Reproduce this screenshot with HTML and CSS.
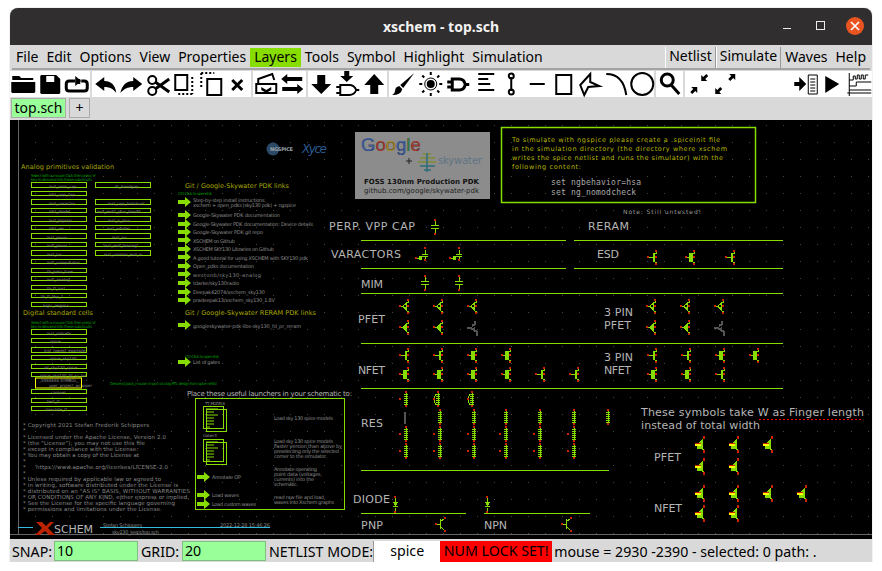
FILE: index.html
```html
<!DOCTYPE html>
<html lang="en">
<head>
  <meta charset="UTF-8" />
  <title>xschem - top.sch</title>
  <link rel="stylesheet" href="styles.css">
</head>
<body>
<div class="window">
  <header class="titlebar">
    <span class="title">xschem - top.sch</span>
    <div class="winbtns">
      <span class="win-min"></span>
      <span class="win-max"></span>
      <span class="win-close">
        <svg width="12" height="12" viewBox="0 0 12 12"><path d="M2 2l8 8M10 2l-8 8" stroke="#fff" stroke-width="1.6"/></svg>
      </span>
    </div>
  </header>

  <nav class="menubar">
    <span class="menu">File</span>
    <span class="menu">Edit</span>
    <span class="menu">Options</span>
    <span class="menu">View</span>
    <span class="menu">Properties</span>
    <span class="menu layers">Layers</span>
    <span class="menu">Tools</span>
    <span class="menu">Symbol</span>
    <span class="menu">Highlight</span>
    <span class="menu">Simulation</span>
    <span class="menu raised push">Netlist</span>
    <span class="menu raised">Simulate</span>
    <span class="menu">Waves</span>
    <span class="menu">Help</span>
  </nav>

  <div class="toolbar">
    <div class="tgroup">
      <svg class="tool" viewBox="0 0 26 26"><path d="M2 5h7l2 2h12v2H2zM1 11h24v10l-1 1H2l-1-1z"/></svg>
      <svg class="tool" viewBox="0 0 26 26"><path fill-rule="evenodd" d="M4 4h15l4 4v14l-1 1H4l-1-1V5zM9 5v6h8V5z"/></svg>
      <svg class="tool" viewBox="0 0 26 26"><path class="line3" d="M12 10H6q-3 0-3 3v4q0 3 3 3h15q3 0 3-3v-4q0-3-3-3h-3"/><path d="M12 5l6 5-6 5zM15 8h2v5h-2z"/></svg>
    </div>
    <div class="tgroup">
      <svg class="tool" viewBox="0 0 26 26"><path d="M3 13l9-7v4c7 0 11 4 12 12-3-4-6-6-12-6v4z"/></svg>
      <svg class="tool" viewBox="0 0 26 26"><path d="M24 13l-9-7v4C8 10 4 14 2 22c4-4 7-6 13-6v4z"/></svg>
      <svg class="tool" viewBox="0 0 26 26"><circle class="line2" cx="7" cy="9" r="4"/><circle class="line2" cx="7" cy="20" r="4"/><path class="line3" d="M10 11l14 10M10 18L24 8"/></svg>
      <svg class="tool" viewBox="0 0 26 26"><rect class="line2" x="4" y="4" width="12" height="15"/><path class="dots" d="M21 6v17M7 23h14"/></svg>
      <svg class="tool" viewBox="0 0 26 26"><rect class="line2" x="9" y="8" width="14" height="16"/><path class="dots" d="M3 2h13M3 2v15"/></svg>
      <svg class="tool" viewBox="0 0 26 26"><path class="line3" d="M8 9l10 10M18 9L8 19"/></svg>
    </div>
    <div class="tgroup">
      <svg class="tool" viewBox="0 0 26 26"><path class="line2" d="M5 13V8l14-5 2 6"/><path class="line2" d="M3 13h20v9H3z"/><path d="M8 16l5 3 5-3v3l-5 3-5-3z"/></svg>
      <svg class="tool" viewBox="0 0 26 26"><path d="M2 8l6-5v3h15v4H8v3zM24 18l-6-5v3H3v4h15v3z"/></svg>
    </div>
    <div class="tgroup">
      <svg class="tool" viewBox="0 0 26 26"><path d="M9 4h8v9h6L13 23 3 13h6z"/></svg>
      <svg class="tool" viewBox="0 0 26 26"><path d="M10 0h5v5h4l-6.500 6L6 5h4z"/><path class="line2" d="M6 14h9q5 0 7 5-2 5-7 5H6zM2 16h4M2 22h4M22 19h3"/></svg>
      <svg class="tool" viewBox="0 0 26 26"><path d="M9 23h8v-9h6L13 3 3 14h6z"/></svg>
    </div>
    <div class="tgroup">
      <svg class="tool" viewBox="0 0 26 26"><path d="M25 2L14 17l-3-3zM10 15l3 3q-1 6-10 6 3-2 3-5t4-4z"/></svg>
      <svg class="tool" viewBox="0 0 26 26"><circle cx="14.500" cy="13" r="4"/><circle class="thin" cx="14.500" cy="13" r="6"/><path class="line2" d="M14.500 1v3M14.500 22v3M3 13h3M23 13h3M6 4.500l2 2M21 19.500l2 2M6 21.500l2-2M21 6.500l2-2"/></svg>
      <svg class="tool" viewBox="0 0 26 26"><path class="line3" d="M10 8h7q5 0 6 5.500-1 5.500-6 5.500h-7zM5 11h5M5 16h5M23 13.500h4"/></svg>
      <svg class="tool" viewBox="0 0 26 26"><path class="line2" d="M9 3h16M9 8h10M9 13h12M9 19h16"/></svg>
      <svg class="tool" viewBox="0 0 26 26"><path class="line2" d="M16 6v14"/><circle class="line2" cx="16" cy="5" r="2.500"/><circle class="line2" cx="16" cy="21" r="2.500"/></svg>
      <svg class="tool" viewBox="0 0 26 26"><path class="line2" d="M7.500 13h15"/></svg>
      <svg class="tool" viewBox="0 0 26 26"><rect class="line2" x="8" y="4" width="15" height="19"/></svg>
      <svg class="tool" viewBox="0 0 26 26"><path class="line2" d="M15 3L5 14l4 10 4-8 11-1-9-4z"/></svg>
      <svg class="tool" viewBox="0 0 26 26"><path class="line2" d="M5 3q17 0 20 21"/></svg>
      <svg class="tool" viewBox="0 0 26 26"><circle class="line2" cx="14" cy="13" r="11"/></svg>
    </div>
    <div class="tgroup">
      <svg class="tool" viewBox="0 0 26 26"><circle class="line3" cx="11" cy="9" r="6"/><path class="line3" d="M15 14l8 9"/></svg>
    </div>
    <div class="tgroup tail">
      <svg class="tool" viewBox="0 0 26 26"><path id="arrow-in" d="M12 16v6l-2-2-3 3-2-2 3-3-2-2z"/><path d="M12 16v6l-2-2-3 3-2-2 3-3-2-2z" transform="rotate(180 14 13)"/></svg>
      <svg class="tool" viewBox="0 0 26 26"><path d="M24 3v6l-2-2-3 3-2-2 3-3-2-2z"/><path d="M24 3v6l-2-2-3 3-2-2 3-3-2-2z" transform="rotate(180 14 13)"/></svg>
      <div class="fill"></div>
      <svg class="tool" viewBox="0 0 26 26"><path d="M1 11h5V6l7 7-7 7v-5H1z"/><path class="thin" d="M15 4h9v19h-9zM17 8h5M17 11h5M17 14h5M17 17h5M17 20h5"/></svg>
      <svg class="tool" viewBox="0 0 26 26"><path d="M6 5l14 8-14 9z"/></svg>
      <svg class="tool" viewBox="0 0 26 26"><path class="thin" d="M3 2v23M1 22h24M3 15h7v-4h15M3 19h22M3 9h4V5h2v3h2V4h2v4h2V4h2v4h2V4h3"/></svg>
    </div>
  </div>

  <div class="tabs">
    <span class="tab active">top.sch</span>
    <span class="tab">+</span>
  </div>

  <svg class="canvas" viewBox="10 119 862 419">
    <defs>
      <pattern id="griddots" x="1" y="5" width="17" height="17" patternUnits="userSpaceOnUse">
        <rect width="1" height="1" fill="#444"/>
      </pattern>
      <g id="linkarrow"><path d="M0-2h7v-3l6 5-6 5v-3H0z" fill="#88dd00"/></g>
      <g id="pins">
        <rect class="red" x="2" y="-7" width="2" height="2"/>
        <rect class="red" x="2" y="6" width="2" height="2"/>
        <rect class="red" x="-6" y="-1" width="2" height="2"/>
        <rect class="red" x="2" y="-1" width="2" height="2"/>
      </g>
      <g id="pfet">
        <path class="lime-fill" d="M-3 0l4-4h1v9H1l-4-4z"/>
        <rect x="-1" y="-1" width="2" height="2" fill="#000"/>
        <path class="lime" d="M-4 0h1M2-4h1v-2M2 5h1v2"/>
        <use href="#pins"/>
      </g>
      <g id="pfet2">
        <path class="lime-fill" d="M-3 0l4-4h1v9H1l-4-4z"/>
        <path class="lime" d="M-4 0h1M2-4h1v-2M2 5h1v2"/>
        <use href="#pins"/>
      </g>
      <g id="pgray">
        <path class="gray" d="M-6 0h4l3 2 3 2v4M-1-2l3-2v-3M0 1l2-1"/>
      </g>
      <g id="nfet">
        <rect class="lime-fill" x="0" y="-4" width="2" height="9"/>
        <path class="lime" d="M-4 0h4M2-4h1v-2M2 5h1v2"/>
        <use href="#pins"/>
      </g>
      <g id="nfet2">
        <rect class="lime-fill" x="-2" y="-4" width="4" height="9"/>
        <path class="lime" d="M-4 0h2M2-4h1v-2M2 5h1v2"/>
        <use href="#pins"/>
      </g>
      <g id="finger">
        <path class="lime-fill" d="M-3 0l4-4h2v9h-6z"/>
        <path class="lime" d="M2-4l1-1v-2M2 5l2 1v2"/>
        <rect class="red" x="3" y="-8" width="2" height="3"/>
        <rect class="red" x="3" y="6" width="2" height="3"/>
        <rect class="red" x="-5" y="-1" width="6" height="1"/>
        <rect x="-5" y="0" width="6" height="2" fill="#ffff00"/>
      </g>
      <g id="coil">
        <path class="lime" d="M-2-5h4M-2-3h4M-2-1h4M-2 1h4M-2 3h4M-2 5h4M0-6v13"/>
        <rect class="red" x="-1" y="-8" width="2" height="2"/>
        <rect class="red" x="-1" y="6" width="2" height="2"/>
      </g>
      <g id="res">
        <use href="#coil"/>
        <rect class="red" x="-7" y="-1" width="2" height="2"/>
      </g>
      <g id="loop">
        <use href="#coil"/>
        <path class="lime" d="M-2-5q-4 5 0 11"/>
        <rect class="red" x="-5" y="-1" width="2" height="2"/>
      </g>
      <g id="cap">
        <path class="lime" d="M0-6v4M-4-2h8M-4 1h8M0 1v5"/>
        <rect class="red" x="-1" y="-8" width="2" height="2"/>
        <rect class="red" x="-1" y="6" width="2" height="2"/>
      </g>
      <g id="varactor">
        <path class="lime" d="M3-6v4M0-2h6M0 0h6M3 0v4M-5 2h4"/>
        <rect class="lime-fill" x="-3" y="0" width="3" height="4"/>
        <rect class="red" x="2" y="-9" width="2" height="2"/>
        <rect class="red" x="2" y="3" width="2" height="2"/>
        <rect class="red" x="-7" y="1" width="2" height="2"/>
      </g>
      <g id="diode">
        <path class="lime" d="M0-6v4M0 4v3"/>
        <path class="lime-fill" d="M-2-2h5L1 2h2v1h-5V2h2z"/>
        <rect class="red" x="-1" y="-8" width="2" height="2"/>
        <rect class="red" x="-1" y="7" width="2" height="2"/>
      </g>
      <g id="bjt">
        <path class="lime" d="M-4 0h3M-1-5v10M-1-2l4-3M-1 2l4 4"/>
        <rect class="red" x="3" y="-7" width="2" height="2"/>
        <rect class="red" x="3" y="6" width="2" height="2"/>
        <rect class="red" x="-6" y="-1" width="2" height="2"/>
      </g>
      <g id="docicon">
        <rect class="lime" x="3.500" y="3.500" width="20" height="22"/>
        <rect class="lime" x="0.500" y="0.500" width="20" height="22" fill="#000"/>
        <path class="lime" d="M3 3h12M3 6h8M3 9h12M3 12h8M3 15h8M3 18h8M3 21h4"/>
      </g>
    </defs>

    <rect x="10" y="119" width="862" height="419" fill="#000"/>
    <rect x="10" y="119" width="862" height="419" fill="url(#griddots)"/>
    <path class="axis" d="M18.500 119v414M10 533.500h862"/>

    <!-- analog primitives -->
    <text class="t-yellow" x="21" y="168" textLength="93" style="font-size:6.500px">Analog primitives validation</text>
    <text class="t-green" x="31" y="175.500" textLength="65">Select with a mouse Click then press 'e'</text>
    <text class="t-green" x="31" y="179.500" textLength="61">key to descend into these subcircuits</text>
    <g class="cellbox">
      <rect x="31.500" y="181.500" width="55" height="5"/><rect x="31.500" y="190.500" width="55" height="4"/>
      <rect x="31.500" y="198.500" width="55" height="5"/><rect x="31.500" y="207.500" width="55" height="4"/>
      <rect x="31.500" y="215.500" width="55" height="5"/><rect x="31.500" y="224.500" width="55" height="4"/>
      <rect x="31.500" y="232.500" width="55" height="5"/><rect x="31.500" y="241.500" width="55" height="4"/>
      <rect x="31.500" y="249.500" width="55" height="5"/><rect x="31.500" y="258.500" width="55" height="4"/>
      <rect x="31.500" y="267.500" width="55" height="4"/><rect x="31.500" y="275.500" width="55" height="4"/>
      <rect x="31.500" y="284.500" width="55" height="4"/><rect x="31.500" y="292.500" width="55" height="4"/>
      <rect x="31.500" y="301.500" width="55" height="4"/>
      <rect x="95.500" y="181.500" width="55" height="5"/><rect x="95.500" y="198.500" width="55" height="5"/>
      <rect x="95.500" y="207.500" width="55" height="4"/><rect x="95.500" y="215.500" width="55" height="5"/>
      <rect x="95.500" y="224.500" width="55" height="4"/><rect x="95.500" y="232.500" width="55" height="5"/>
      <rect x="95.500" y="241.500" width="55" height="4"/><rect x="95.500" y="249.500" width="55" height="5"/>
      <rect x="31.500" y="328.500" width="55" height="5"/><rect x="31.500" y="337.500" width="55" height="4"/>
      <rect x="31.500" y="346.500" width="55" height="5"/><rect x="31.500" y="354.500" width="55" height="4"/>
      <rect x="31.500" y="363.500" width="55" height="4"/><rect x="31.500" y="371.500" width="55" height="4"/>
      <rect x="31.500" y="388.500" width="55" height="4"/><rect x="31.500" y="397.500" width="55" height="4"/>
      <rect x="31.500" y="405.500" width="55" height="4"/>
    </g>
    <g class="t-cell">
      <text x="49" y="187">inst_mim_cap</text><text x="115" y="187">ilt_bandgap</text>
      <text x="49" y="195">inst_vpp_cap</text>
      <text x="49" y="204">inst_varactor</text><text x="108" y="204">inst_vpp_botshunt</text>
      <text x="49" y="212">inst_diode</text><text x="97" y="212">inst_esd1_plus_bandit</text>
      <text x="49" y="221">inst_bipolar</text><text x="108" y="221">inst_n_plus</text>
      <text x="49" y="229">inst_res</text><text x="107" y="229">inst_nmiller</text>
      <text x="47" y="238">inst_pmos</text><text x="112" y="238">inst_mr</text>
      <text x="47" y="246">inst_pmos</text><text x="104" y="246">inst_esd_biasing</text>
      <text x="47" y="255">inst_lvs</text><text x="104" y="255">inst_cmirror_esd_m</text>
      <text x="47" y="263">inst_comparator</text>
      <text x="47" y="272">tb_pass_fuse</text>
      <text x="47" y="280">inst_analog</text>
      <text x="47" y="289">tb_ft_inst</text>
      <text x="41" y="297">tb_ft_sky_1</text>
      <text x="43" y="306">logic_regpics</text>
    </g>

    <!-- digital cells -->
    <text class="t-yellow" x="23" y="314" textLength="70" style="font-size:6.500px">Digital standard cells</text>
    <text class="t-green" x="31" y="322.500" textLength="65">Select with a mouse Click then press 'e'</text>
    <text class="t-green" x="31" y="326.500" textLength="61">key to descend into these subcircuits</text>
    <g class="t-cell">
      <text x="47" y="334">inst_stdcells</text>
      <text x="50" y="342">spice</text>
      <text x="44" y="351">inst_lowest_example</text>
      <text x="50" y="359">spice_sky130</text>
      <text x="44" y="368">all_sky130_spice</text>
      <text x="40" y="376">spice_sky130_fd_sc_hd</text>
      <text x="39" y="381">_XSSSSSS SYMBOL_</text>
      <text x="49" y="386">user_project_wrapper</text>
      <text x="51" y="393">caravel</text>
      <text x="47" y="402">test_tt</text>
      <text x="45" y="410">simulate_tt</text>
    </g>
    <rect x="35.500" y="377" width="46" height="10" fill="none" stroke="#ffff00"/>
    <text class="t-green" x="110" y="383.500" textLength="107">Descend_back_mouse: import of a big RTL design from spice netlist</text>

    <!-- links -->
    <text class="t-yellow" x="185" y="187" textLength="104" style="font-size:6.500px">Git / Google-Skywater PDK links</text>
    <text class="t-green" x="178" y="194" textLength="34">Ctrl-Click to open link</text>
    <use href="#linkarrow" x="178" y="201"/><use href="#linkarrow" x="178" y="214"/>
    <use href="#linkarrow" x="178" y="223"/><use href="#linkarrow" x="178" y="231"/>
    <use href="#linkarrow" x="178" y="239"/><use href="#linkarrow" x="178" y="248"/>
    <use href="#linkarrow" x="178" y="256"/><use href="#linkarrow" x="178" y="265"/>
    <use href="#linkarrow" x="178" y="273"/><use href="#linkarrow" x="178" y="282"/>
    <use href="#linkarrow" x="178" y="291"/><use href="#linkarrow" x="178" y="299"/>
    <use href="#linkarrow" x="178" y="324"/><use href="#linkarrow" x="178" y="361"/>
    <g class="t-link">
      <text x="193" y="201" textLength="73">Step-by-step install instructions,</text>
      <text x="193" y="206" textLength="103">xschem + open_pdks (sky130 pdk) + ngspice</text>
      <text x="193" y="216" textLength="87">Google-Skywater PDK documentation</text>
      <text x="193" y="225" textLength="120">Google-Skywater PDK documentation: Device details</text>
      <text x="193" y="233" textLength="70">Google-Skywater PDK git repo</text>
      <text x="193" y="242" textLength="42">XSCHEM on Github</text>
      <text x="193" y="250" textLength="81">XSCHEM SKY130 Libraries on Github</text>
      <text x="193" y="259" textLength="115">A good tutorial for using XSCHEM with SKY130 pdk</text>
      <text x="193" y="267" textLength="61">Open_pdks documentation</text>
      <text x="193" y="276" textLength="68">westonb/sky130-analog</text>
      <text x="193" y="284" textLength="46">tdarke/sky130radio</text>
      <text x="193" y="293" textLength="72">Deepak42074/xschem_sky130</text>
      <text x="193" y="301" textLength="82">pradeepak13/xschem_sky130_1.8V</text>
      <text x="193" y="327" textLength="108">googleskywater-pdk-libs-sky130_fd_pr_reram</text>
      <text x="193" y="363" textLength="27">List of gates</text>
    </g>
    <text class="t-yellow" x="185" y="314" textLength="131" style="font-size:6.500px">Git / Google-Skywater RERAM PDK links</text>
    <text class="t-green" x="185" y="356.500" textLength="34">Ctrl-Click to open link</text>

    <!-- launchers -->
    <text class="t-label" x="187" y="395" textLength="165" style="font-size:7px">Place these useful launchers in your schematic to:</text>
    <rect class="lime" x="195.500" y="397.500" width="149" height="111"/>
    <text class="t-tiny" x="205" y="404" textLength="20">TT_MODELS</text>
    <use href="#docicon" x="203" y="405"/>
    <text class="t-tiny" x="203" y="436" textLength="14">Corner: tt</text>
    <use href="#docicon" x="203" y="438"/>
    <use href="#linkarrow" x="197" y="476"/><use href="#linkarrow" x="197" y="494"/><use href="#linkarrow" x="197" y="503"/>
    <g class="t-link">
      <text x="212" y="478" textLength="29">Annotate OP</text>
      <text x="212" y="496" textLength="27">Load waves</text>
      <text x="212" y="505" textLength="44">Load custom waves</text>
      <text x="274" y="419" textLength="59">Load sky 130 spice models</text>
      <text x="274" y="442" textLength="59">Load sky 130 spice models</text>
      <text x="274" y="447" textLength="68">Faster version than above by</text>
      <text x="274" y="452" textLength="65">preselecting only the selected</text>
      <text x="274" y="457" textLength="53">corner to the simulator.</text>
      <text x="274" y="470" textLength="43">Annotate operating</text>
      <text x="274" y="475" textLength="48">point data (voltages,</text>
      <text x="274" y="480" textLength="40">currents) into the</text>
      <text x="274" y="485" textLength="24">schematic.</text>
      <text x="274" y="498" textLength="50">read raw file and load</text>
      <text x="274" y="503" textLength="60">waves into Xschem graphs</text>
    </g>

    <!-- licence -->
    <g class="t-copy">
      <text x="23" y="426" textLength="126">* Copyright 2021 Stefan Frederik Schippers</text>
      <text x="23" y="431">*</text>
      <text x="23" y="438" textLength="143">* Licensed under the Apache License, Version 2.0</text>
      <text x="23" y="444" textLength="122">* (the "License"); you may not use this file</text>
      <text x="23" y="450" textLength="115">* except in compliance with the License.</text>
      <text x="23" y="456" textLength="116">* You may obtain a copy of the License at</text>
      <text x="23" y="462">*</text>
      <text x="23" y="468">*</text><text x="36" y="468" textLength="132">https://www.apache.org/licenses/LICENSE-2.0</text>
      <text x="23" y="474">*</text>
      <text x="23" y="480" textLength="138">* Unless required by applicable law or agreed to</text>
      <text x="23" y="486" textLength="155">* in writing, software distributed under the License is</text>
      <text x="23" y="492" textLength="167">* distributed on an "AS IS" BASIS, WITHOUT WARRANTIES</text>
      <text x="23" y="498" textLength="166">* OR CONDITIONS OF ANY KIND, either express or implied.</text>
      <text x="23" y="504" textLength="152">* See the License for the specific language governing</text>
      <text x="23" y="510" textLength="139">* permissions and limitations under the License.</text>
    </g>

    <!-- title block -->
    <path class="cyan" d="M18 526.500h15M100 526.500h170"/>
    <path d="M36 521h6l4 4 4-4h4l-6 6 7 7h-6l-4-4-5 4h-5l7-7z" fill="#bb2200"/>
    <text class="t-label" x="54" y="532" textLength="39">SCHEM</text>
    <text class="t-tiny gray-text" x="103" y="526" textLength="39">Stefan Schippers</text>
    <text class="t-tiny gray-text" x="220" y="526" textLength="50">2022-12-28 15:46:26</text>
    <text class="t-tiny gray-text" x="112" y="533" textLength="47">sky130_tests/top.sch</text>

    <!-- sim engines -->
    <circle cx="273" cy="148" r="6.500" fill="#2c4a66"/>
    <text class="t-bold" x="270" y="150" textLength="23">NGSPICE</text>
    <text x="302" y="152" class="xyce" textLength="25">Xyce</text>

    <!-- google logo -->
    <rect x="355" y="131" width="135" height="67" fill="#8c8c8c"/>
    <text class="goog" y="150"><tspan x="361" fill="#3a5fa8">G</tspan><tspan fill="#a83a30">o</tspan><tspan fill="#ab8a20">o</tspan><tspan fill="#3a5fa8">g</tspan><tspan fill="#3a8048">l</tspan><tspan fill="#a83a30">e</tspan></text>
    <path d="M406 160h6M409 157v6" stroke="#222" fill="none"/>
    <path d="M423 153h8M420 157h15M418 161h18" stroke="#7f8a30" stroke-width="1.500" fill="none"/>
    <path d="M420 165h15M424 169h7M427 152v19" stroke="#2c6e78" stroke-width="1.500" fill="none"/>
    <text class="sky" x="438" y="163" textLength="44">skywater</text>
    <text class="t-foss" x="364" y="183" textLength="115">FOSS 130nm Production PDK</text>
    <text class="t-repo" x="364" y="192" textLength="115">github.com/google/skywater-pdk</text>

    <!-- ngspice note -->
    <rect x="501.500" y="126.500" width="254" height="75" fill="none" stroke="#88dd00" stroke-width="1.500"/>
    <g class="t-note">
      <text x="512" y="141" textLength="208">To simulate with ngspice please create a .spiceinit file</text>
      <text x="512" y="150" textLength="215">in the simulation directory (the directory where xschem</text>
      <text x="512" y="159" textLength="211">writes the spice netlist and runs the simulator) with the</text>
      <text x="512" y="168" textLength="69">following content:</text>
    </g>
    <text class="t-mono" x="551" y="184" textLength="90">set ngbehavior=hsa</text>
    <text class="t-mono" x="551" y="194" textLength="85">set ng_nomodcheck</text>
    <text class="t-small" x="623" y="213" textLength="78">Note: Still untested!</text>

    <!-- section lines -->
    <path class="lime" d="M361 239.500h205M574 239.500h209M361 267.500h205M574 267.500h209M361 292.500h422M361 342.500h422M361 387.500h422M361 469.500h248M361 512.500h105M484 512.500h106"/>
    <path d="M759 418.500h103" stroke="#ff0000" stroke-dasharray="2 2"/>

    <!-- section labels -->
    <g class="t-label">
      <text x="329" y="229" textLength="86">PERP. VPP CAP</text>
      <text x="588" y="229" textLength="41">RERAM</text>
      <text x="331" y="257" textLength="70">VARACTORS</text>
      <text x="597" y="257" textLength="22">ESD</text>
      <text x="361" y="287" textLength="22">MIM</text>
      <text x="358" y="322" textLength="27">PFET</text>
      <text x="604" y="315" textLength="29">3 PIN</text>
      <text x="604" y="328" textLength="27">PFET</text>
      <text x="358" y="373" textLength="27">NFET</text>
      <text x="604" y="360" textLength="29">3 PIN</text>
      <text x="604" y="373" textLength="27">NFET</text>
      <text x="361" y="426" textLength="22">RES</text>
      <text x="353" y="502" textLength="37">DIODE</text>
      <text x="361" y="528" textLength="22">PNP</text>
      <text x="484" y="528" textLength="23">NPN</text>
      <text x="641" y="415" textLength="223">These symbols take W as Finger length</text>
      <text x="641" y="428" textLength="119">instead of total width</text>
      <text x="654" y="460" textLength="27">PFET</text>
      <text x="654" y="511" textLength="28">NFET</text>
    </g>

    <!-- devices -->
    <g class="sym">
      <use href="#cap" x="435" y="226"/>
      <use href="#varactor" x="422" y="255"/><use href="#varactor" x="456" y="255"/>
      <use href="#nfet" x="653" y="256"/><use href="#nfet2" x="691" y="256"/><use href="#nfet" x="731" y="256"/>
      <use href="#cap" x="425" y="282"/><use href="#cap" x="459" y="282"/>

      <use href="#pfet" x="405" y="305"/><use href="#pfet" x="439" y="305"/><use href="#pfet" x="473" y="305"/>
      <use href="#pfet2" x="405" y="326"/><use href="#pfet2" x="439" y="326"/><use href="#pgray" x="473" y="327"/>
      <use href="#pfet" x="652" y="305"/><use href="#pfet" x="686" y="305"/><use href="#pfet" x="720" y="305"/>
      <use href="#pfet2" x="652" y="326"/><use href="#pfet2" x="686" y="326"/><use href="#pgray" x="720" y="327"/>

      <use href="#nfet" x="405" y="354"/><use href="#nfet" x="439" y="354"/><use href="#nfet2" x="473" y="354"/><use href="#nfet2" x="507" y="354"/>
      <use href="#nfet2" x="405" y="373"/><use href="#nfet2" x="439" y="373"/><use href="#nfet2" x="473" y="373"/><use href="#nfet2" x="507" y="373"/><use href="#nfet" x="541" y="373"/><use href="#nfet" x="575" y="373"/>
      <use href="#nfet" x="653" y="354"/><use href="#nfet" x="687" y="354"/><use href="#nfet2" x="721" y="354"/><use href="#nfet2" x="755" y="354"/>
      <use href="#nfet2" x="653" y="373"/><use href="#nfet2" x="687" y="373"/><use href="#nfet" x="721" y="373"/>

      <use href="#res" x="406" y="398"/><use href="#loop" x="438" y="398"/><use href="#loop" x="472" y="398"/>
      <path class="gray" d="M405 411v12M404 413h2M404 416h2M404 419h2"/>
      <use href="#coil" x="440" y="416"/><use href="#coil" x="474" y="416"/><use href="#coil" x="506" y="416"/><use href="#coil" x="540" y="416"/><use href="#coil" x="574" y="416"/><use href="#coil" x="608" y="416"/>
      <use href="#res" x="406" y="433"/><use href="#res" x="440" y="433"/><use href="#res" x="474" y="433"/><use href="#res" x="506" y="433"/><use href="#res" x="540" y="433"/><use href="#res" x="574" y="433"/>
      <use href="#res" x="406" y="450"/><use href="#res" x="440" y="450"/><use href="#res" x="474" y="450"/><use href="#res" x="506" y="450"/><use href="#res" x="540" y="450"/><use href="#res" x="574" y="450"/>

      <use href="#diode" x="395" y="503"/><use href="#diode" x="487" y="503"/>
      <use href="#bjt" x="441" y="523"/><use href="#bjt" x="567" y="523"/>

      <use href="#finger" x="700" y="443"/><use href="#finger" x="734" y="443"/><use href="#finger" x="768" y="443"/>
      <use href="#finger" x="700" y="465"/><use href="#finger" x="734" y="465"/>
      <use href="#finger" x="700" y="492"/><use href="#finger" x="734" y="492"/><use href="#finger" x="768" y="492"/><use href="#finger" x="802" y="492"/>
      <use href="#finger" x="700" y="512"/><use href="#finger" x="734" y="512"/>
    </g>
  </svg>

  <footer class="statusbar">
    <span class="stat-label snap">SNAP:</span>
    <span class="entry">10</span>
    <span class="stat-label grid">GRID:</span>
    <span class="entry">20</span>
    <span class="stat-label netlist">NETLIST MODE:</span>
    <span class="mode">spice</span>
    <span class="numlock">NUM LOCK SET!</span>
    <span class="stat-label">mouse = 2930 -2390 - selected: 0 path: .</span>
  </footer>
</div>
</body>
</html>
```

FILE: styles.css
```css
html, body {
  margin: 0;
  padding: 0;
  background-color: #fff;
}
body {
  font-family: "Noto Sans", sans-serif;
  color: #000;
}
.window {
  width: 862px;
  height: 554px;
  margin: 8px 0 0 10px;
  display: flex;
  flex-direction: column;
  background-color: #d9d9d9;
  overflow: hidden;
  border-radius: 8px 8px 0 0;
  box-shadow: 0 0 1px #777;
}

/* title bar */
.titlebar {
  height: 37px;
  flex: none;
  background-color: #302e2e;
  position: relative;
  display: flex;
  align-items: center;
  justify-content: center;
}
.title {
  color: #f2f2f2;
  font-weight: bold;
  font-size: 14px;
}
.winbtns {
  position: absolute;
  right: 8px;
  top: 0;
  height: 37px;
  display: flex;
  align-items: center;
  gap: 15px;
}
.win-min {
  width: 8px;
  height: 1px;
  margin-top: 4px;
  background-color: #eee;
}
.win-max {
  width: 7px;
  height: 7px;
  border: 1px solid #eee;
  margin: 0 5px 2px 10px;
}
.win-close {
  width: 18px;
  height: 18px;
  margin-left: 1px;
  margin-bottom: 2px;
  border-radius: 50%;
  background-color: #e95420;
  display: flex;
  align-items: center;
  justify-content: center;
}

/* menus */
.menubar {
  flex: none;
  height: 21px;
  margin: 2px 2px 0;
  display: flex;
  align-items: center;
  font-size: 14px;
  border-bottom: 2px solid #a3a3a3;
}
.menu {
  padding: 0 4px;
  height: 19px;
  line-height: 18px;
}
.layers {
  background-color: #88dd00;
}
.raised {
  border-left: 1px solid #fff;
  border-right: 1px solid #999;
  height: 21px;
  padding: 0 3px;
}
.push {
  margin-left: auto;
}

/* tool buttons */
.toolbar {
  flex: none;
  height: 26px;
  margin-top: 1px;
  display: flex;
  background-color: #d9d9d9;
}
.tgroup {
  display: flex;
  background-color: #fff;
  margin-right: 2px;
}
.tail {
  flex: 1;
  margin-right: 0;
}
.fill {
  flex: 1;
}
.tool {
  width: 26.500px;
  height: 26px;
  flex: none;
  overflow: visible;
}
.line2, .line3, .thin, .dots {
  fill: none;
  stroke: #000;
}
.line2 { stroke-width: 2; }
.line3 { stroke-width: 3; }
.thin { stroke-width: 1; }
.dots {
  stroke-width: 2;
  stroke-dasharray: 2 2;
}

/* tabs */
.tabs {
  flex: none;
  height: 23px;
  display: flex;
  align-items: flex-start;
  padding-left: 1px;
  gap: 3px;
  font-size: 14px;
}
.tab {
  width: 21px;
  height: 20px;
  line-height: 17px;
  box-sizing: border-box;
  text-align: center;
  border: 1px solid #aaa;
  margin-top: 1px;
  background-color: #d9d9d9;
}
.active {
  width: 55px;
  background-color: #99ff99;
}

/* schematic */
.canvas {
  flex: none;
  display: block;
  width: 862px;
  height: 419px;
  background-color: #000;
}
.canvas text {
  font-family: "DejaVu Sans", sans-serif;
}
.axis {
  fill: none;
  stroke: #666;
}
.lime, .cellbox rect {
  fill: none;
  stroke: #88dd00;
  stroke-width: 1;
}
.lime-fill { fill: #88dd00; }
.red { fill: #cc2200; }
.gray {
  fill: none;
  stroke: #555;
  stroke-width: 2;
}
.sym { shape-rendering: crispEdges; }
.cyan {
  fill: none;
  stroke: #33bbdd;
}
.t-yellow { fill: #a8a800; }
.t-green {
  fill: #009900;
  font-size: 4px;
}
.t-cell text {
  fill: #888;
  font-size: 4px;
}
.t-link text {
  fill: #8a8a8a;
  font-size: 5px;
}
.t-tiny {
  fill: #8a8a8a;
  font-size: 4px;
}
.gray-text {
  font-size: 5px;
}
.t-copy text {
  fill: #888;
  font-size: 5.500px;
}
.t-label, .t-label text {
  fill: #b5b5b5;
  font-size: 11px;
}
.t-bold {
  fill: #9aa0a8;
  font-size: 5px;
  font-weight: bold;
}
.xyce {
  fill: #2a5a90;
  font-size: 12px;
  font-style: italic;
}
.goog {
  font-family: "Liberation Sans", sans-serif !important;
  font-size: 18.500px;
  stroke: currentColor;
  stroke-width: 0.2;
}
.sky {
  fill: #5f7484;
  font-size: 10px;
}
.t-foss {
  fill: #111;
  font-size: 7px;
  font-weight: bold;
}
.t-repo {
  fill: #222;
  font-size: 7px;
}
.t-note text {
  fill: #b8b800;
  font-size: 6.500px;
}
.t-mono {
  fill: #aaa;
  font-size: 8px;
  font-family: "DejaVu Sans Mono", monospace !important;
}
.t-small {
  fill: #999;
  font-size: 6px;
}

/* status line */
.statusbar {
  flex: none;
  height: 24px;
  display: flex;
  align-items: center;
  font-size: 14.200px;
  padding-left: 2px;
}
.stat-label {
  white-space: nowrap;
}
.snap { flex: 0 0 42px; }
.grid {
  flex: 0 0 41px;
  padding-left: 3px;
}
.netlist {
  flex: 0 0 104px;
  padding-left: 3px;
}
.entry {
  flex: 0 0 84px;
  height: 20px;
  line-height: 18px;
  padding-left: 2px;
  box-sizing: border-box;
  background-color: #99ff99;
  border: 1px solid #7fbf7f;
}
.mode {
  width: 67px;
  height: 21px;
  line-height: 20px;
  text-align: center;
  box-sizing: border-box;
  background-color: #fff;
  border-left: 1px solid #999;
}
.numlock {
  width: 112px;
  height: 21px;
  line-height: 20px;
  text-align: center;
  white-space: nowrap;
  background-color: #ff0000;
  margin-right: 2px;
}
```
